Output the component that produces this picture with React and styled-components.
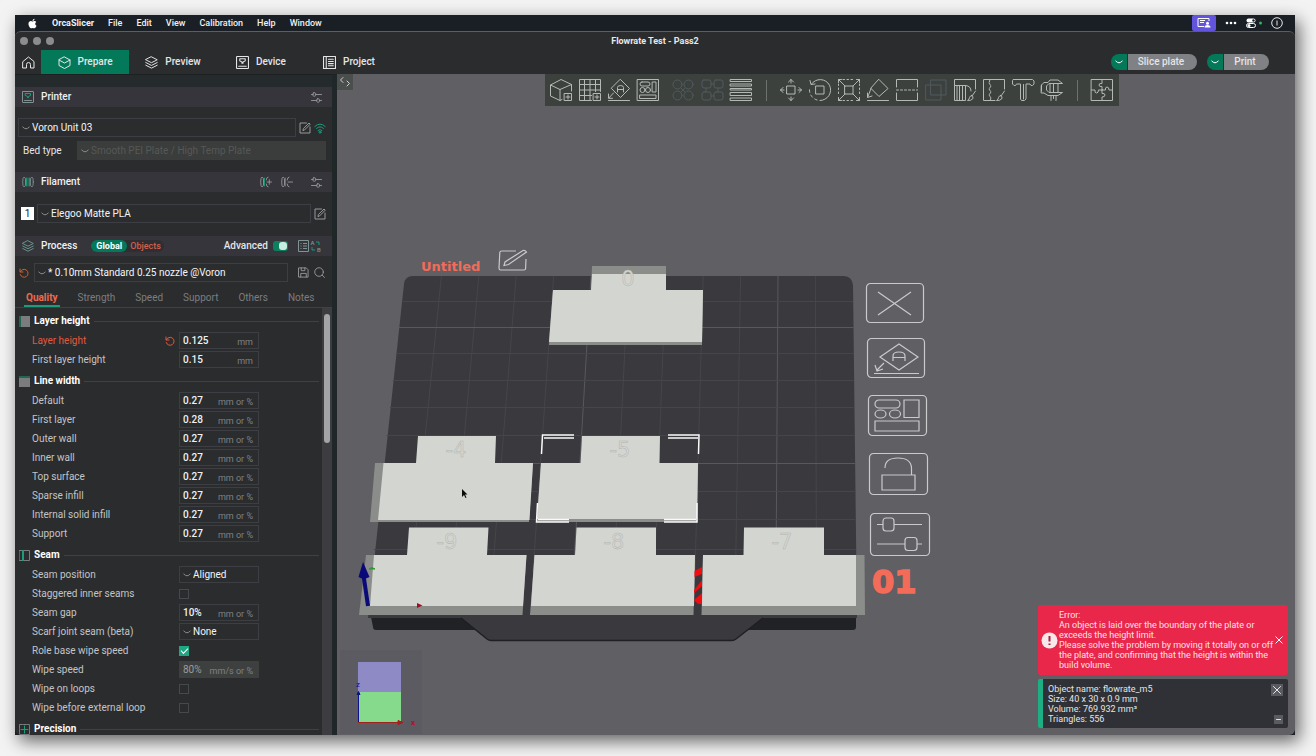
import React from "react";
import styled, { createGlobalStyle } from "styled-components";
import { FaApple } from "react-icons/fa";

const GlobalStyle = createGlobalStyle`
  * {
    box-sizing: border-box;
  }
  body {
    margin: 0;
    background: #f3f3f3;
    color: #e4e5e6;
    font-family: Roboto, "Liberation Sans", sans-serif;
    font-size: 10px;
    line-height: 12px;
  }
  button,
  input,
  select {
    font: inherit;
    color: inherit;
    margin: 0;
    padding: 0;
    border: none;
    background: none;
    outline: none;
  }
  a {
    color: inherit;
    text-decoration: none;
  }
`;

const Page = styled.div`
  height: 100vh;
  min-height: 480px;
  padding: 15px 21px 21px 15px;
  display: flex;
`;

const Desktop = styled.div`
  flex: 1;
  min-width: 0;
  display: flex;
  flex-direction: column;
  background: #1a1f26;
  box-shadow: 4px 6px 16px rgba(0, 0, 0, 0.6);
`;

const MenuBar = styled.nav`
  height: 16px;
  flex: none;
  display: flex;
  align-items: center;
  padding: 0 12px;
  gap: 14px;
  color: #f0f1f2;
  font-size: 9px;
`;

const MenuLink = styled.a`
  font-weight: ${(p) => (p.$strong ? 700 : 500)};
`;

const MenuStatus = styled.div`
  margin-left: auto;
  height: 16px;
  display: flex;
  align-items: center;
  gap: 9px;
`;

const ShareBadge = styled.span`
  width: 24px;
  height: 16px;
  display: flex;
  align-items: center;
  justify-content: center;
  background: #6254dc;
  border-radius: 2px;
`;

const Window = styled.div`
  flex: 1;
  min-height: 0;
  display: flex;
  flex-direction: column;
  border-top: 1px solid #5c5e61;
  border-radius: 6px;
  background: #2b2c2e;
  overflow: hidden;
`;

const TitleBar = styled.header`
  height: 18px;
  flex: none;
  display: grid;
  grid-template-columns: 1fr auto 1fr;
  align-items: center;
  padding: 0 5px;
  font-size: 9px;
  font-weight: 700;
  color: #e8e8e8;
`;

const Lights = styled.div`
  display: flex;
  gap: 5px;

  span {
    width: 8px;
    height: 8px;
    border-radius: 50%;
    background: #8c8c8e;
  }
`;

const TabBar = styled.div`
  height: 24px;
  flex: none;
  display: flex;
  align-items: center;
  padding-right: 26px;
`;

const HomeButton = styled.button`
  width: 26px;
  height: 24px;
  display: flex;
  align-items: center;
  justify-content: center;
`;

const MainTab = styled.button`
  width: 88px;
  height: 24px;
  display: flex;
  align-items: center;
  justify-content: center;
  gap: 7px;
  font-weight: 500;
  background: ${(p) => (p.$active ? "#03795a" : "transparent")};
`;

const Actions = styled.div`
  margin-left: auto;
  display: flex;
  gap: 10px;
`;

const SplitButton = styled.div`
  display: flex;
  gap: 1px;
  height: 16px;

  button {
    display: flex;
    align-items: center;
    justify-content: center;
  }
  .arrow {
    width: 16px;
    background: #03795a;
    border-radius: 8px 0 0 8px;
  }
  .action {
    padding: 0 12px 0 9px;
    background: #808184;
    border-radius: 0 8px 8px 0;
    font-weight: 500;
    min-width: ${(p) => p.$min}px;
  }
`;

const Body = styled.div`
  flex: 1;
  min-height: 0;
  display: flex;
`;

const Sidebar = styled.aside`
  width: 322px;
  flex: none;
  display: flex;
  flex-direction: column;
  border-top: 1px solid #1d2021;
  border-right: 5px solid #1f2728;
`;

const SidebarStrip = styled.div`
  height: 12px;
  flex: none;
  background: #252b2c;
`;

const PanelHeader = styled.div`
  height: 20px;
  flex: none;
  display: flex;
  align-items: center;
  gap: 7px;
  padding: 0 10px 0 7px;
  background: #35353b;
  font-weight: 500;

  h2 {
    margin: 0;
    font-size: 10px;
    font-weight: 500;
    color: #f0f1f2;
  }
`;

const HeaderTools = styled.div`
  margin-left: auto;
  display: flex;
  align-items: center;
  gap: ${(p) => p.$gap}px;
`;

const PanelBody = styled.div`
  flex: none;
  display: flex;
  flex-direction: column;
  gap: 4px;
  padding: ${(p) => p.$pad};
`;

const PanelRow = styled.div`
  display: flex;
  align-items: center;
  gap: ${(p) => p.$gap || 3}px;
  padding-left: ${(p) => p.$left || 0}px;

  > label {
    width: 48px;
  }
`;

const IconButton = styled.button`
  display: flex;
  color: ${(p) => p.$color || "#97999b"};
`;

const SelectBox = styled.div`
  flex: ${(p) => (p.$width ? "none" : 1)};
  width: ${(p) => (p.$width ? p.$width + "px" : "auto")};
  height: ${(p) => (p.$small ? 17 : 19)}px;
  display: flex;
  align-items: center;
  gap: 2px;
  padding-left: 3px;
  border: 1px solid ${(p) => (p.$disabled ? "#3b3d3c" : "#3d3e43")};
  background: ${(p) => (p.$disabled ? "#3b3d3c" : "transparent")};
  color: ${(p) => (p.$disabled ? "#555856" : "#f4f5f6")};

  svg {
    color: #8b8d8f;
    flex: none;
  }
  select {
    appearance: none;
    flex: 1;
    min-width: 0;
    opacity: 1;
  }
`;

const SlotNumber = styled.span`
  width: 13px;
  height: 13px;
  display: flex;
  align-items: center;
  justify-content: center;
  background: #fff;
  color: #222;
`;

const ScopeSwitch = styled.div`
  display: flex;
  height: 12px;
  margin-left: 7px;
  border-radius: 6px;
  background: #2f2e33;
  font-size: 9px;

  button {
    padding: 0 3px;
    color: #d2604a;
    line-height: 12px;
  }
  button:first-child {
    padding: 0 5px;
    color: #fff;
    font-weight: 700;
    background: #03795a;
    border-radius: 6px;
  }
`;

const Toggle = styled.input`
  appearance: none;
  width: 15px;
  height: 10px;
  border-radius: 3px;
  background: #0d7f61;
  display: flex;
  align-items: center;
  justify-content: flex-end;
  padding: 1px;

  &::after {
    content: "";
    width: 8px;
    height: 8px;
    border-radius: 3px;
    background: #c9ece1;
  }
`;

const SettingTabs = styled.div`
  flex: none;
  height: 21px;
  display: flex;
  align-items: flex-end;
  gap: 16px;
  padding: 0 9px;
  border-bottom: 1px solid #3f4145;
`;

const SettingTab = styled.button`
  height: 17px;
  padding: 0 2px;
  border-bottom: 2px solid ${(p) => (p.$active ? "#1c9c7c" : "transparent")};
  color: ${(p) => (p.$active ? "#ef6a4d" : "#7b7d80")};
  font-weight: ${(p) => (p.$active ? 700 : 400)};
`;

const SettingsArea = styled.div`
  flex: 1;
  min-height: 0;
  display: flex;
`;

const SettingsList = styled.div`
  flex: 1;
  overflow: hidden;
  padding: 5px 3px 0 4px;
`;

const ScrollTrack = styled.div`
  width: 10px;
  padding: 6px 2px;
  background: #3c3c41;

  &::after {
    content: "";
    display: block;
    height: 31%;
    border-radius: 3px;
    background: #a3a4a6;
  }
`;

const Section = styled.section`
  display: flex;
  flex-direction: column;
  gap: 2px;
  margin-bottom: 5px;

  h3 {
    display: flex;
    align-items: center;
    gap: 4px;
    height: 16px;
    margin: 0 0 1px;
    font-size: 10px;
    font-weight: 700;
    color: #fff;
  }
  h3::after {
    content: "";
    flex: 1;
    height: 1px;
    background: #404146;
  }
`;

const SettingRow = styled.div`
  display: grid;
  grid-template-columns: 133px 14px 80px;
  align-items: center;
  height: 17px;
  padding-left: 13px;
  color: ${(p) => (p.$changed ? "#e0593f" : "#c3c4c6")};
`;

const ValueBox = styled.div`
  width: 80px;
  height: 17px;
  display: flex;
  align-items: center;
  padding: 0 5px 0 3px;
  border: 1px solid ${(p) => (p.$disabled ? "#3e403f" : "#3d3e43")};
  background: ${(p) => (p.$disabled ? "#3e403f" : "transparent")};
  color: ${(p) => (p.$disabled ? "#9b9d9c" : "#f0f1f2")};

  input {
    flex: 1;
    width: 20px;
    min-width: 0;
    font-weight: ${(p) => (p.$disabled ? 400 : 500)};
  }
  span {
    padding-top: 2px;
    font-size: 9px;
    color: #7f8183;
  }
`;

const CheckBox = styled.input`
  appearance: none;
  width: 10px;
  height: 10px;
  border: 1px solid #47484c;

  &:checked {
    background: #1fa783;
    border-color: #1fa783;
  }
  &:checked::after {
    content: "";
    display: block;
    width: 6px;
    height: 3px;
    margin: 1px;
    border: solid #fff;
    border-width: 0 0 1px 1px;
    transform: rotate(-45deg);
  }
`;

const Viewport = styled.main`
  flex: 1;
  min-width: 0;
  position: relative;
  background: #5f5f64;
  overflow: hidden;
`;

// The free canvas: everything placed on it uses scene coordinates.
const Stage = styled.div`
  position: absolute;
  inset: 0 0 auto 0;
  aspect-ratio: 958 / 661;
`;

const SceneSvg = styled.svg`
  display: block;
  width: 100%;
  height: 100%;
`;

const PlateButton = styled.button`
  position: absolute;
  left: ${(p) => ((p.$x - 337) / 958) * 100}%;
  top: ${(p) => ((p.$y - 74) / 661) * 100}%;
  width: ${(p) => (p.$w / 958) * 100}%;
  height: ${(p) => (p.$h / 661) * 100}%;
  color: #c9cacc;

  svg {
    display: block;
    width: 100%;
    height: 100%;
  }
`;

const CollapseButton = styled.button`
  position: absolute;
  left: 0;
  top: 0;
  width: 16px;
  height: 16px;
  display: flex;
  align-items: center;
  justify-content: center;
  background: #4a4e4d;
  color: #cfd1d0;
`;

const ToolbarWrap = styled.div`
  position: relative;
  display: flex;
  justify-content: center;
  padding-left: 31px;
`;

const Toolbar = styled.div`
  height: 32px;
  display: flex;
  align-items: center;
  padding: 0 2px;
  background: #3c413e;
`;

const ToolGroup = styled.div`
  display: flex;

  & + & {
    margin-left: 6px;
  }
`;

const ToolButton = styled.button`
  width: 29px;
  height: 32px;
  display: flex;
  align-items: center;
  justify-content: center;
  color: ${(p) => (p.disabled ? "#505a5e" : "#b4b9b5")};
`;

const ToolDivider = styled.span`
  width: 1px;
  height: 21px;
  margin: 0 10px;
  background: #6d726f;
`;

const Notices = styled.div`
  position: absolute;
  right: 7px;
  bottom: 7px;
  width: 250px;
  display: flex;
  flex-direction: column;
  gap: 4px;
  font-size: 9px;
  line-height: 10px;
`;

const ErrorNotice = styled.div`
  display: flex;
  align-items: center;
  gap: 1px;
  padding: 5px 5px 5px 3px;
  border-radius: 2px;
  background: #e8274b;
  color: #fbe3e8;

  p {
    flex: 1;
    margin: 0;
  }
`;

const InfoNotice = styled.div`
  display: flex;
  justify-content: space-between;
  padding: 5px 5px 4px;
  border-left: 5px solid #1dae84;
  border-radius: 2px;
  background: #303136;

  p {
    margin: 0;
  }
`;

const InfoButtons = styled.div`
  display: flex;
  flex-direction: column;
  align-items: flex-end;
  justify-content: space-between;

  button {
    display: flex;
    align-items: center;
    justify-content: center;
    width: 12px;
    height: 12px;
    background: #5a5b60;
  }
  button + button {
    width: 9px;
    height: 9px;
  }
`;

const Icon = ({ size = 12, box = 24, stroke = 1.5, children }) => (
  <svg
    width={size}
    height={size}
    viewBox={`0 0 ${box} ${box}`}
    fill="none"
    stroke="currentColor"
    strokeWidth={stroke}
    strokeLinejoin="round"
    strokeLinecap="round"
    aria-hidden="true"
  >
    {children}
  </svg>
);

const Chevron = ({ color }) => (
  <svg width="8" height="4" viewBox="0 0 8 4" fill="none" stroke={color || "currentColor"} aria-hidden="true">
    <path d="M0.5 0.8 Q2.5 2.8 4 2.8 T7.5 0.8" />
  </svg>
);

const PrinterIcon = ({ size = 12, accent }) => (
  <Icon size={size} box={12} stroke={1}>
    <rect x="0.5" y="0.5" width="11" height="11" rx="0.5" />
    <path d="M2.5 9.5h7" />
    <path d="M3.5 2.5h5v2l-2 1v1.2h-1V5.5l-2-1z" stroke={accent || "currentColor"} />
  </Icon>
);

const LayersIcon = ({ size = 12 }) => (
  <Icon size={size} box={12} stroke={0.9}>
    <path d="M6 0.8 11.3 3.5 6 6.2 0.7 3.5z" />
    <path d="M0.7 6 6 8.7 11.3 6M0.7 8.5 6 11.2 11.3 8.5" />
  </Icon>
);

const SlidersIcon = () => (
  <Icon size={11} box={11} stroke={0.9}>
    <path d="M0.5 2.5h1.5M5 2.5h5.5M0.5 8.5h5M8.6 8.5h1.9" />
    <rect x="2" y="0.8" width="2.6" height="3.4" rx="0.8" />
    <rect x="5.8" y="6.8" width="2.6" height="3.4" rx="0.8" />
  </Icon>
);

const EditIcon = () => (
  <Icon size={12} box={12} stroke={1}>
    <path d="M7.5 1H1v10h10V5" />
    <path d="M4 8.2 4.4 6.5 10 1l1.2 1.2L5.7 7.8z" />
  </Icon>
);

const ResetIcon = () => (
  <Icon size={10} box={10} stroke={1}>
    <path d="M1 1v3h3" />
    <path d="M1.3 3.8A4 4 0 1 1 1.2 6.5" />
  </Icon>
);

const FilamentIcon = ({ sign }) => (
  <Icon size={12} box={12} stroke={0.9}>
    <ellipse cx="2.2" cy="6" rx="1.5" ry="5" />
    {!sign && <ellipse cx="9.8" cy="6" rx="1.5" ry="5" />}
    <path d="M4.5 2v8" stroke="#1c9c7c" />
    {!sign && <path d="M6 2v8M7.5 2v8" stroke="#1c9c7c" />}
    {sign && <path d="M8 1Q6.5 1 6.2 4M8 11Q6.5 11 6.2 8M7 6h4.5" />}
    {sign === "+" && <path d="M9.3 3.7v4.6" />}
  </Icon>
);

const Letter = ({ size = 8, ...rest }) => (
  <text fill="currentColor" stroke="none" fontSize={size} textAnchor="middle" {...rest} />
);

const plusBox = (
  <>
    <rect x="15.5" y="15.5" width="7" height="7" />
    <path d="M19 17v4M17 19h4" />
  </>
);

const brush = <path d="M22.5 13 19 18M18.5 17.5q2 .5 1.5 3-2 2.500-5.500 2 2-1 2-3 .5-1.500 2-2z" />;

const toolIcons = {
  "Add object": (
    <>
      <path d="M13 21.5 11 22.5 1.5 18V7L12 1.5 22.5 6.5V13" />
      <path d="M1.5 7 11 11.5 22.5 6.5M11 11.5v11" />
      {plusBox}
    </>
  ),
  "Add plate": (
    <>
      <path d="M13.5 22.5H1.5V1.5h21V13.5" />
      <path d="M1.5 6.5h21M1.5 12h21M1.5 17.5h12M6.5 1.5v21M12 1.5v21M17.5 1.5v12" />
      {plusBox}
    </>
  ),
  "Auto orient": (
    <>
      <path d="M13.5 1.5 22.5 10.5 13.5 19.5 4.5 10.5z" />
      <path d="M10.5 14V9.5Q10.5 7.5 13.5 7.5T16.5 9.5V14M10.5 11.5h6" />
      <path d="M6.5 15 1.8 20M1.5 16v4.3h4M1.5 22.5h21" />
    </>
  ),
  Arrange: (
    <>
      <rect x="1.5" y="1.5" width="21" height="21" />
      <rect x="4" y="4" width="10" height="4" rx="2" />
      <circle cx="6.5" cy="12" r="2.5" />
      <circle cx="12" cy="12" r="2.5" />
      <path d="M16.5 4H20v10h-3.5zM4 17h16v3.5H4z" />
    </>
  ),
  "Split to objects": (
    <>
      <circle cx="6.5" cy="6.5" r="4.5" />
      <circle cx="17.5" cy="6.5" r="4.5" />
      <circle cx="6.5" cy="17.5" r="4.5" />
      <circle cx="17.5" cy="17.5" r="4.5" />
      <path d="M10 10l4 4M14 10l-4 4" />
    </>
  ),
  "Split to parts": (
    <>
      <rect x="2" y="2" width="9" height="8" rx="2" />
      <rect x="14" y="2" width="9" height="8" rx="2" />
      <rect x="2" y="14" width="9" height="8" rx="2" />
      <rect x="14" y="14" width="9" height="8" rx="2" />
      <path d="M11 6h3M11 18h3M6 10v4M18 10v4" />
    </>
  ),
  "Variable layer height": (
    <path d="M1.5 1.5h21v2h-21zM1.5 6h21v2h-21zM1.5 10.5h21v1.5h-21zM1.5 14.5h21v3h-21zM1.5 20h21v2.5h-21z" />
  ),
  Move: (
    <>
      <rect x="8" y="8" width="8" height="8" />
      <path d="M12 5V1.5M9.5 4 12 1.5 14.5 4M12 19v3.5M9.5 20l2.5 2.5L14.5 20M5 12H1.5M4 9.5 1.5 12 4 14.5M19 12h3.5M20 9.5l2.5 2.5L20 14.5" />
    </>
  ),
  Rotate: (
    <>
      <rect x="8" y="8" width="8" height="8" />
      <path d="M3.5 6A10.5 10.5 0 1 1 12 22.5M2 2.5 3 6.5 7 6" />
      <path d="M9 22A10.5 10.5 0 0 1 1.5 11" strokeDasharray="2.5 3" />
    </>
  ),
  Scale: (
    <>
      <rect x="8" y="8" width="8" height="8" />
      <path d="M6 1.5h12M6 22.5h12M1.5 6v12M22.5 6v12" strokeDasharray="1.5 2.5" />
      <path d="M8 8 1.5 1.5M1.5 4.5v-3h3M16 8l6.5-6.5M19.5 1.5h3v3M8 16l-6.5 6.5M1.5 19.5v3h3M16 16l6.5 6.5M22.5 19.5v3h-3" />
    </>
  ),
  "Lay on face": (
    <>
      <path d="M13 1.5 22 10.5 13 18.5 5 10.5z" />
      <path d="M5 10.5 1.8 19M1.5 15v4.5L6 18M1.5 22.5h21" />
    </>
  ),
  Cut: (
    <>
      <path d="M1.5 9V1.5h21V9M1.5 15v7.5h21V15" />
      <path d="M1.5 12h21" strokeDasharray="2 2" />
    </>
  ),
  "Mesh boolean": (
    <>
      <rect x="2" y="7" width="15" height="15" />
      <rect x="7" y="2" width="15" height="15" />
    </>
  ),
  "Support painting": (
    <>
      <path d="M22.5 11V1.5h-21v21h11V7.5M1.5 7.5h11Q18 8 18 13" />
      <path d="M4 7.500v15M6.500 7.500v15M9.500 7.500v15" />
      {brush}
    </>
  ),
  "Seam painting": (
    <>
      <path d="M13 22.5H1.5V1.5h21V11" />
      <path d="M8 1.5 7 5l2 3-2 3 2 3-2 3 2 3-1 2.5" strokeDasharray="2.5 1" />
      {brush}
    </>
  ),
  "Text shape": (
    <path d="M2.500 1.500h19l1.500 1.500v3l-1.500 1.500h-1.500L19 6h-4v15l-1.500 1.500h-3L9.500 21V6h-4L4.500 7.500H3L1.500 6V3zM12.500 6.500v14.500" />
  ),
  Measure: (
    <>
      <path d="M1.500 7 4 4.500H8L10 2h8l4.500 3.500H9L6.500 8v4L9 14.500h13.500L18 17.500H8L4 15H1.500zM1.500 7v6" />
      <path d="M10 6v8M13.500 6v8M18 6v8M11 17.500v5M13.500 17.500v3M16 17.500v5" />
    </>
  ),
  "Assembly view": (
    <>
      <rect x="1.5" y="1.5" width="21" height="21" />
      <path d="M12 1.5v4q-3-.5-3 1.5t3 1.5V12M1.5 12H5q-.5 3 1.5 3t2-3H12M12 12v3.5q3-.5 3 1.5t-3 2v3.5M12 12h3.5q-.5-3 1.5-3t2 3h3.5" />
    </>
  ),
};

const toolGroups = [
  ["Add object", "Add plate", "Auto orient", "Arrange"],
  ["Split to objects", "Split to parts", "Variable layer height"],
  null,
  ["Move", "Rotate", "Scale", "Lay on face", "Cut", "Mesh boolean", "Support painting", "Seam painting", "Text shape", "Measure"],
  null,
  ["Assembly view"],
];
const disabledTools = ["Split to objects", "Split to parts", "Mesh boolean"];

const sections = [
  {
    title: "Layer height",
    icon: (
      <>
        <path d="M1 0v11" stroke="#1c9c7c" />
        <path d="M2 0h9v11H2z" fill="#7a7c7e" stroke="none" />
      </>
    ),
    rows: [
      { label: "Layer height", value: "0.125", unit: "mm", changed: true },
      { label: "First layer height", value: "0.15", unit: "mm" },
    ],
  },
  {
    title: "Line width",
    icon: (
      <>
        <path d="M0 1h11" stroke="#1c9c7c" />
        <path d="M0 2h11v9H0z" fill="#7a7c7e" stroke="none" />
      </>
    ),
    rows: [
      { label: "Default", value: "0.27", unit: "mm or %" },
      { label: "First layer", value: "0.28", unit: "mm or %" },
      { label: "Outer wall", value: "0.27", unit: "mm or %" },
      { label: "Inner wall", value: "0.27", unit: "mm or %" },
      { label: "Top surface", value: "0.27", unit: "mm or %" },
      { label: "Sparse infill", value: "0.27", unit: "mm or %" },
      { label: "Internal solid infill", value: "0.27", unit: "mm or %" },
      { label: "Support", value: "0.27", unit: "mm or %" },
    ],
  },
  {
    title: "Seam",
    icon: (
      <>
        <rect x="0.5" y="0.5" width="10" height="10" />
        <path d="M4 1v9" stroke="#1c9c7c" strokeWidth="2" />
      </>
    ),
    rows: [
      { label: "Seam position", select: "Aligned" },
      { label: "Staggered inner seams", check: false },
      { label: "Seam gap", value: "10%", unit: "mm or %" },
      { label: "Scarf joint seam (beta)", select: "None" },
      { label: "Role base wipe speed", check: true },
      { label: "Wipe speed", value: "80%", unit: "mm/s or %", disabled: true },
      { label: "Wipe on loops", check: false },
      { label: "Wipe before external loop", check: false },
    ],
  },
  {
    title: "Precision",
    icon: (
      <>
        <rect x="0.5" y="0.5" width="10" height="10" strokeDasharray="3 1" />
        <path d="M5.5 2v7M2 5.5h7" stroke="#1c9c7c" />
      </>
    ),
    rows: [],
  },
];

const Setting = ({ section, row }) => {
  const id = `${section}-${row.label}`.toLowerCase().replace(/[^a-z]+/g, "-");
  return (
    <SettingRow $changed={row.changed}>
      <label htmlFor={id}>{row.label}</label>
      {row.changed ? (
        <IconButton $color="#e0593f" aria-label="Reset value">
          <ResetIcon />
        </IconButton>
      ) : (
        <span />
      )}
      {row.value && (
        <ValueBox $disabled={row.disabled}>
          <input id={id} defaultValue={row.value} disabled={row.disabled} />
          <span>{row.unit}</span>
        </ValueBox>
      )}
      {row.select && (
        <SelectBox $small $width={80}>
          <Chevron />
          <select id={id}>
            <option>{row.select}</option>
          </select>
        </SelectBox>
      )}
      {row.check !== undefined && <CheckBox id={id} type="checkbox" defaultChecked={row.check} />}
    </SettingRow>
  );
};

const gridColumns = Array.from({ length: 11 }, (_, i) => i + 1);
const gridRows = [301, 327, 353, 380, 407, 435, 463, 491, 519, 549];

const parts = [
  {
    label: "0",
    x: 628,
    y: 286,
    shade: "592,266 666,266 666,290 703,290 702,345 549,345 553,290 591,290",
    top: "592,274 666,274 666,290 703,290 702,342 549,342 553,290 591,290",
  },
  {
    label: "-4",
    x: 456,
    y: 457,
    shade: "375,463 533,463 529,522 370,522",
    top: "418,436 496,436 495,463 533,463 529.5,520 378,520 383.5,463 416,463",
  },
  {
    label: "-5",
    x: 620,
    y: 457,
    shade: "541,463 698,463 697,522 537,522",
    top: "582,436 660,436 659.5,463 698,463 697,519 537,519 541,463 580.5,463",
  },
  {
    label: "-9",
    x: 447,
    y: 549,
    shade: "366,555 526.5,555 522.5,615 359,615",
    top: "409,527.5 488.5,527.5 487,555 526.5,555 523,606 370,606 374,555 407,555",
  },
  {
    label: "-8",
    x: 614,
    y: 549,
    shade: "534.5,555 695,555 693.5,615 530,615",
    top: "576.5,527.5 656,527.5 656,555 695,555 694,606 531,606 534.5,555 575,555",
  },
  {
    label: "-7",
    x: 782,
    y: 549,
    shade: "703,555 864.5,555 865,615 701.5,615",
    top: "744,527.5 824,527.5 824,555 856,555 856,606 702,606 703,555 743.5,555",
  },
];

const Scene = () => (
  <SceneSvg viewBox="337 74 958 661" role="img" aria-label="Build plate">
    <path d="M371 617h485v10q0 3-3 3H376q-3 0-3-3z" fill="#212226" />
    <path
      d="M413 276H843q9 0 10 9L857 618H763L736 639q-2 1.5-4 1.5H491q-2 0-4-1.5L461 618H368L404 284q1-8 9-8z"
      fill="#39393e"
    />
    <path d="M461 618 487 639q2 1.5 4 1.5H732q2 0 4-1.5L763 618" fill="none" stroke="#1f2024" strokeWidth="1.5" />
    <g stroke="#45464b" strokeWidth="1">
      {gridColumns.map((k) => (
        <path
          key={k}
          d={`M${404 + k * 37.4} 276 L${371 + k * 40.5} 572`}
          stroke={k % 5 === 0 ? "#58595f" : undefined}
        />
      ))}
      {gridRows.map((y, i) => (
        <path
          key={y}
          d={`M${402 - (y - 300) * 0.113} ${y + 0.5} H${853 + (y - 300) * 0.012}`}
          stroke={i % 5 === 1 ? "#58595f" : undefined}
        />
      ))}
    </g>
    {parts.map((part) => (
      <g key={part.label}>
        <polygon points={part.shade} fill="#8b8d8a" />
        <polygon points={part.top} fill="#d3d5d1" />
        <text
          x={part.x}
          y={part.y}
          textAnchor="middle"
          fontFamily="DejaVu Sans"
          fontSize="21"
          fill="#d3d5d1"
          stroke="#b3b5b1"
          strokeWidth="0.5"
        >
          {part.label}
        </text>
      </g>
    ))}
    <g fill="none" stroke="#fafafa" strokeWidth="1.5">
      <path d="M541.5 454 542.5 435H574M544 438h30M668 435h31l-.5 19M668 438h30" />
      <path d="M537.5 503 536.5 522H569M538 519.5h31M697 503v19H664M664 519.5h32" />
    </g>
    <path d="M694.5 571 702 567v7l-7.5 3zM694 590l8-10v6l-8 7zM694 600l8-7v11h-4z" fill="#f30d10" />
    <path d="M368 606 363.5 575" stroke="#0a0a78" strokeWidth="4" />
    <path d="M363 562 358.5 577q5 3 11 0z" fill="#09097a" />
    <path d="M369 569q3-3 6 0z" fill="#2a9a32" stroke="#2a9a32" />
    <path d="M417 603v5l5.5-2.5z" fill="#a30d23" />
    <path d="M462 489v8l2-2 1.5 3 1-.5-1.5-3h2.5z" fill="#0c0c0c" />
    <text x="421" y="271" fontFamily="DejaVu Sans" fontWeight="700" fontSize="13" fill="#f26c59">
      Untitled
    </text>
    <text
      x="872"
      y="593"
      fontFamily="DejaVu Sans"
      fontWeight="700"
      fontSize="32"
      fill="#f26c59"
      stroke="#f26c59"
      strokeWidth="1.5"
    >
      01
    </text>
    <rect x="340" y="650" width="82" height="84" fill="#5b5b61" />
    <rect x="358" y="662" width="43" height="30" fill="#8d8ac6" />
    <rect x="358" y="692" width="43" height="30" fill="#85db8b" />
    <path d="M358 722.5h42M398 720.5l5 2-5 2z" stroke="#a02020" fill="#a02020" />
    <path d="M358.5 722V694M357 694.5l1.5-3 1.5 3z" stroke="#10108c" fill="#10108c" />
    <text x="356" y="687" fontSize="8" fill="#10108c">z</text>
    <text x="411" y="725" fontSize="8" fontWeight="700" fill="#b01030">x</text>
  </SceneSvg>
);

const plateButtons = [
  { name: "Rename plate", x: 498, y: 249, w: 30, h: 23, art: <path d="M18 2H3.5Q2 2 1.8 3.5L1 19q0 2 1.5 2H26q1.5 0 1.6-1.5L28 10M6 16.5 7 13 25 1.5q2-.5 3.5 1.5L10.5 15.5z" /> },
  { name: "Delete plate", x: 865, y: 282, w: 60, h: 42, frame: true, art: <path d="M13 10 46 33M46 10 13 33" /> },
  {
    name: "Orient plate",
    x: 866,
    y: 337,
    w: 60,
    h: 42,
    frame: true,
    art: (
      <>
        <path d="M33 7 52 20 33 33 14 20z" />
        <path d="M27 24V19q0-4 6-4t6 4v5M27 20.5h12M18 26l-7 7M9 28l2 6 6-2M8 36.5h45" />
      </>
    ),
  },
  {
    name: "Arrange plate",
    x: 867,
    y: 394,
    w: 61,
    h: 43,
    frame: true,
    art: (
      <>
        <rect x="8" y="6" width="25" height="8" rx="4" />
        <ellipse cx="13.5" cy="20" rx="5.5" ry="4" />
        <ellipse cx="28" cy="20" rx="5.5" ry="4" />
        <path d="M37 6h15v17.5H37zM8 27h44v10H8z" />
      </>
    ),
  },
  { name: "Lock plate", x: 868, y: 452, w: 61, h: 44, frame: true, art: <path d="M14 23h33v15H14zM17 16q0-10 13-10t13.5 10v7" /> },
  {
    name: "Plate settings",
    x: 869,
    y: 512,
    w: 62,
    h: 45,
    frame: true,
    art: (
      <>
        <path d="M8 12.5h6M25 12.5h28M8 32h28M48 32h5" />
        <rect x="14" y="6" width="11" height="13" rx="3" />
        <rect x="36" y="25.5" width="12" height="13" rx="3" />
      </>
    ),
  },
];

const MacMenu = () => (
  <MenuBar>
    <FaApple size={11} color="#fff" />
    <MenuLink href="#app" $strong>OrcaSlicer</MenuLink>
    {["File", "Edit", "View", "Calibration", "Help", "Window"].map((item) => (
      <MenuLink key={item} href={`#${item.toLowerCase()}`}>
        {item}
      </MenuLink>
    ))}
    <MenuStatus>
      <ShareBadge>
        <svg width="14" height="10" viewBox="0 0 14 10" fill="none" stroke="#fff" aria-hidden="true">
          <path d="M7 8.5H1v-8h11V3M3 2.5h5M3 4.5h4" />
          <circle cx="10.5" cy="5.2" r="1.5" fill="#fff" stroke="none" />
          <path d="M7.5 9.5q0-2.5 3-2.5t3 2.5z" fill="#fff" stroke="none" />
        </svg>
      </ShareBadge>
      <svg width="12" height="4" viewBox="0 0 12 4" fill="#fff" aria-hidden="true">
        <circle cx="2" cy="2" r="1.3" />
        <circle cx="6" cy="2" r="1.3" />
        <circle cx="10" cy="2" r="1.3" />
      </svg>
      <svg width="16" height="10" viewBox="0 0 16 10" aria-hidden="true">
        <rect x="0.5" y="0.5" width="9" height="4" rx="2" fill="#fff" />
        <circle cx="7.5" cy="2.5" r="1.2" fill="#1a1f26" />
        <rect x="0.5" y="5.5" width="9" height="4" rx="2" fill="none" stroke="#fff" />
        <circle cx="3" cy="7.5" r="1.5" fill="#fff" />
        <circle cx="14.5" cy="5" r="1.5" fill="#35b45a" />
      </svg>
      <svg width="12" height="12" viewBox="0 0 12 12" fill="none" stroke="#e6e6e6" aria-hidden="true">
        <circle cx="6" cy="6" r="5.3" />
        <path d="M6 3.5v5" />
      </svg>
    </MenuStatus>
  </MenuBar>
);

const mainTabs = [
  {
    name: "Prepare",
    icon: (
      <Icon size={13} box={13} stroke={1}>
        <path d="M6.5 1 12 4v5.5l-5.5 3-5.5-3V4zM1 4l5.5 3L12 4" />
      </Icon>
    ),
  },
  { name: "Preview", icon: <LayersIcon size={13} /> },
  { name: "Device", icon: <PrinterIcon size={13} /> },
  {
    name: "Project",
    icon: (
      <Icon size={13} box={12} stroke={1}>
        <path d="M.5.5h11v11H.5zM3 .5v11M5 3h4.5M5 5h4.5M5 7h4.5M5 9h4.5" />
      </Icon>
    ),
  },
];

const TopBar = () => (
  <TabBar>
    <HomeButton aria-label="Home">
      <Icon size={13} box={13} stroke={1}>
        <path d="M1 5.5 6.5 1 12 5.5V12H8.5V8.5q0-2-2-2t-2 2V12H1z" />
      </Icon>
    </HomeButton>
    {mainTabs.map((tab) => (
      <MainTab key={tab.name} $active={tab.name === "Prepare"}>
        {tab.icon}
        {tab.name}
      </MainTab>
    ))}
    <Actions>
      <SplitButton $min={69}>
        <button className="arrow" aria-label="Slice options"><Chevron color="#fff" /></button>
        <button className="action">Slice plate</button>
      </SplitButton>
      <SplitButton $min={45}>
        <button className="arrow" aria-label="Print options"><Chevron color="#fff" /></button>
        <button className="action">Print</button>
      </SplitButton>
    </Actions>
  </TabBar>
);

const SidePanel = () => (
  <Sidebar>
    <SidebarStrip />
    <PanelHeader>
      <IconButton as="span" $color="#7f9490"><PrinterIcon accent="#1c9c7c" /></IconButton>
      <h2>Printer</h2>
      <HeaderTools>
        <IconButton aria-label="Printer settings"><SlidersIcon /></IconButton>
      </HeaderTools>
    </PanelHeader>
    <PanelBody $pad="11px 6px 12px 3px">
      <PanelRow>
        <SelectBox>
          <Chevron />
          <select aria-label="Printer">
            <option>Voron Unit 03</option>
          </select>
        </SelectBox>
        <IconButton aria-label="Edit printer"><EditIcon /></IconButton>
        <IconButton $color="#1c9c7c" aria-label="Connection">
          <Icon size={12} box={12} stroke={1}>
            <path d="M.8 4.5Q6-.5 11.2 4.5M2.5 6.5Q6 3 9.5 6.5M4 8.5Q6 6.5 8 8.5" />
            <circle cx="6" cy="10.2" r="1" />
          </Icon>
        </IconButton>
      </PanelRow>
      <PanelRow $left={5} $gap={6}>
        <label htmlFor="bed-type">Bed type</label>
        <SelectBox $disabled>
          <Chevron />
          <select id="bed-type" disabled>
            <option>Smooth PEI Plate / High Temp Plate</option>
          </select>
        </SelectBox>
      </PanelRow>
    </PanelBody>

    <PanelHeader>
      <IconButton as="span" $color="#7f9490"><FilamentIcon /></IconButton>
      <h2>Filament</h2>
      <HeaderTools $gap={9}>
        <IconButton aria-label="Add filament"><FilamentIcon sign="+" /></IconButton>
        <IconButton aria-label="Remove filament"><FilamentIcon sign="-" /></IconButton>
        <span />
        <IconButton aria-label="Filament settings"><SlidersIcon /></IconButton>
      </HeaderTools>
    </PanelHeader>
    <PanelBody $pad="12px 6px 13px 6px">
      <PanelRow>
        <SlotNumber>1</SlotNumber>
        <SelectBox>
          <Chevron />
          <select aria-label="Filament">
            <option>Elegoo Matte PLA</option>
          </select>
        </SelectBox>
        <IconButton aria-label="Edit filament"><EditIcon /></IconButton>
      </PanelRow>
    </PanelBody>

    <PanelHeader>
      <IconButton as="span" $color="#6f9c92"><LayersIcon /></IconButton>
      <h2>Process</h2>
      <ScopeSwitch>
        <button>Global</button>
        <button>Objects</button>
      </ScopeSwitch>
      <HeaderTools $gap={5}>
        <label htmlFor="advanced">Advanced</label>
        <Toggle id="advanced" type="checkbox" defaultChecked />
        <span />
        <IconButton $color="#7f9490" aria-label="Compare presets">
          <svg width="24" height="12" viewBox="0 0 24 12" fill="none" stroke="currentColor" aria-hidden="true">
            <path d="M.5.5h10v11H.5zM2.5 3.5h1M5 3.5h4M2.5 6h1M5 6h4M2.5 8.5h1M5 8.5h4" />
            <Letter size={6} x="14.5" y="5">A</Letter>
            <Letter size={6} x="21" y="11.5">B</Letter>
            <path d="M18 2h3v3M14 7v3h3" stroke="#1c9c7c" />
          </svg>
        </IconButton>
      </HeaderTools>
    </PanelHeader>
    <PanelBody $pad="7px 7px 5px 4px">
      <PanelRow $gap={5}>
        <IconButton $color="#c9622f" aria-label="Reset preset"><ResetIcon /></IconButton>
        <SelectBox>
          <Chevron />
          <select aria-label="Process preset">
            <option>* 0.10mm Standard 0.25 nozzle @Voron</option>
          </select>
        </SelectBox>
        <span />
        <IconButton aria-label="Save preset">
          <Icon size={11} box={12} stroke={1}>
            <path d="M1 1h8l2 2v8H1zM3.5 1v3h4V1M3 11V7h6v4" />
          </Icon>
        </IconButton>
        <IconButton aria-label="Search settings">
          <Icon size={11} box={12} stroke={1}>
            <circle cx="5.5" cy="5.5" r="4.7" />
            <path d="m9 9 2.5 2.5" />
          </Icon>
        </IconButton>
      </PanelRow>
    </PanelBody>

    <SettingTabs>
      {["Quality", "Strength", "Speed", "Support", "Others", "Notes"].map((tab) => (
        <SettingTab key={tab} $active={tab === "Quality"}>
          {tab}
        </SettingTab>
      ))}
    </SettingTabs>
    <SettingsArea>
      <SettingsList>
        {sections.map((section) => (
          <Section key={section.title}>
            <h3>
              <IconButton as="span" $color="#7a7c7e">
                <Icon size={11} box={11} stroke={1}>{section.icon}</Icon>
              </IconButton>
              {section.title}
            </h3>
            {section.rows.map((row) => (
              <Setting key={row.label} section={section.title} row={row} />
            ))}
          </Section>
        ))}
      </SettingsList>
      <ScrollTrack />
    </SettingsArea>
  </Sidebar>
);

const Canvas = () => (
  <Viewport>
    <Stage>
      <Scene />
      {plateButtons.map((b) => (
        <PlateButton key={b.name} aria-label={b.name} $x={b.x} $y={b.y} $w={b.w} $h={b.h}>
          <svg viewBox={`0 0 ${b.w} ${b.h}`} fill="none" stroke="currentColor" strokeWidth="1.2" aria-hidden="true">
            {b.frame && <rect x="1.5" y="1.5" width={b.w - 3} height={b.h - 3} rx="4" />}
            {b.art}
          </svg>
        </PlateButton>
      ))}
    </Stage>
    <ToolbarWrap>
      <Toolbar>
        {toolGroups.map((group, i) =>
          group ? (
            <ToolGroup key={i}>
              {group.map((name) => (
                <ToolButton key={name} aria-label={name} disabled={disabledTools.includes(name)}>
                  <Icon size={24} stroke={1}>{toolIcons[name]}</Icon>
                </ToolButton>
              ))}
            </ToolGroup>
          ) : (
            <ToolDivider key={i} />
          )
        )}
      </Toolbar>
    </ToolbarWrap>
    <CollapseButton aria-label="Collapse sidebar">
      <Icon size={12} box={12} stroke={1}>
        <path d="M4 1.5 1.5 4 4 6.5M8 5l2.5 2.5L8 10" />
      </Icon>
    </CollapseButton>
    <Notices>
      <ErrorNotice role="alert">
        <svg width="17" height="17" viewBox="0 0 17 17" aria-hidden="true">
          <circle cx="8.5" cy="8.5" r="8" fill="#f7e8ea" />
          <path d="M8.5 4v5.5M8.5 11.5v1.5" stroke="#a3203f" strokeWidth="2" />
        </svg>
        <p>
          Error:
          <br />
          An object is laid over the boundary of the plate or exceeds the height limit.
          <br />
          Please solve the problem by moving it totally on or off the plate, and confirming that the height is
          within the build volume.
        </p>
        <IconButton $color="#fff" aria-label="Dismiss error">
          <Icon size={8} box={8} stroke={1}>
            <path d="m.8.8 6.400 6.400M7.200.8.8 7.200" />
          </Icon>
        </IconButton>
      </ErrorNotice>
      <InfoNotice>
        <p>
          Object name: flowrate_m5
          <br />
          Size: 40 x 30 x 0.9 mm
          <br />
          Volume: 769.932 mm³
          <br />
          Triangles: 556
        </p>
        <InfoButtons>
          <button aria-label="Close info">
            <Icon size={10} box={10} stroke={1}>
              <path d="m1.5 1.5 7 7M8.5 1.5l-7 7" />
            </Icon>
          </button>
          <button aria-label="Minimize info">
            <Icon size={7} box={7} stroke={1}>
              <path d="M1.5 3.5h4" />
            </Icon>
          </button>
        </InfoButtons>
      </InfoNotice>
    </Notices>
  </Viewport>
);

const App = () => {
  return (
    <Page>
      <GlobalStyle />
      <Desktop>
        <MacMenu />
        <Window>
          <TitleBar>
            <Lights>
              <span />
              <span />
              <span />
            </Lights>
            <span>Flowrate Test - Pass2</span>
          </TitleBar>
          <TopBar />
          <Body>
            <SidePanel />
            <Canvas />
          </Body>
        </Window>
      </Desktop>
    </Page>
  );
};

export default App;
